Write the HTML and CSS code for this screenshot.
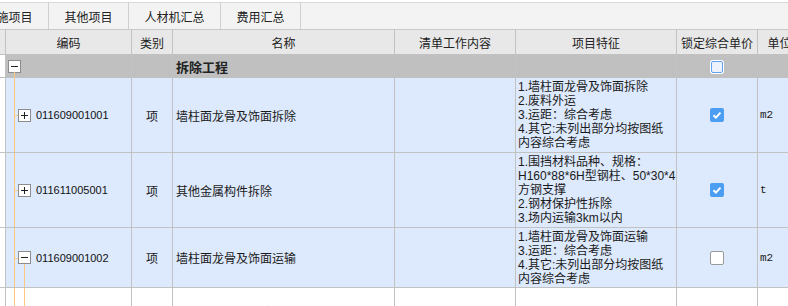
FILE: index.html
```html
<!DOCTYPE html>
<html lang="zh">

<head>
    <meta charset="UTF-8">
    <title>分部分项</title>
    <link rel="stylesheet" href="styles.css">
</head>

<body>
    <!-- Tabs -->
    <div class="tab-bar">
        <div class="tab tab-first">措施项目</div>
        <div class="tab">其他项目</div>
        <div class="tab">人材机汇总</div>
        <div class="tab">费用汇总</div>
    </div>

    <div class="sheet">
        <!-- Header -->
        <div class="row head">
            <div class="cell"></div>
            <div class="cell">编码</div>
            <div class="cell">类别</div>
            <div class="cell">名称</div>
            <div class="cell">清单工作内容</div>
            <div class="cell">项目特征</div>
            <div class="cell">锁定综合单价</div>
            <div class="cell">单位</div>
        </div>

        <!-- Group -->
        <div class="row group">
            <div class="cell blank"></div>
            <div class="cell code">
                <svg class="tog tog-root" width="13" height="13" viewBox="0 0 13 13"><rect x="0.5" y="0.5" width="12" height="12" fill="#fff" stroke="#8c8c8c"/><path d="M3 6.5h7" stroke="#222"/></svg>
                <span class="line line-down"></span>
            </div>
            <div class="cell"></div>
            <div class="cell name strong">拆除工程</div>
            <div class="cell"></div>
            <div class="cell"></div>
            <div class="cell center">
                <span class="chk chk-empty"></span>
            </div>
            <div class="cell"></div>
        </div>

        <div class="row item tall">
            <div class="cell blank"></div>
            <div class="cell code">
                <span class="line line-full"></span>
                <span class="stub"></span>
                <svg class="tog" width="13" height="13" viewBox="0 0 13 13"><rect x="0.5" y="0.5" width="12" height="12" fill="#fff" stroke="#8c8c8c"/><path d="M3 6.5h7M6.5 3v7" stroke="#222"/></svg>
                <span class="num">011609001001</span>
            </div>
            <div class="cell center">项</div>
            <div class="cell name">墙柱面龙骨及饰面拆除</div>
            <div class="cell"></div>
            <div class="cell feature">1.墙柱面龙骨及饰面拆除<br>2.废料外运<br>3.运距：综合考虑<br>4.其它:未列出部分均按图纸<br>内容综合考虑</div>
            <div class="cell center">
                <span class="chk chk-on"><svg width="14" height="14" viewBox="0 0 14 14"><path d="M3.5 7.2l2.4 2.4 4.6-5" fill="none" stroke="#fff" stroke-width="2"/></svg></span>
            </div>
            <div class="cell unit">m2</div>
        </div>

        <div class="row item tall">
            <div class="cell blank"></div>
            <div class="cell code">
                <span class="line line-full"></span>
                <span class="stub"></span>
                <svg class="tog" width="13" height="13" viewBox="0 0 13 13"><rect x="0.5" y="0.5" width="12" height="12" fill="#fff" stroke="#8c8c8c"/><path d="M3 6.5h7M6.5 3v7" stroke="#222"/></svg>
                <span class="num">011611005001</span>
            </div>
            <div class="cell center">项</div>
            <div class="cell name">其他金属构件拆除</div>
            <div class="cell"></div>
            <div class="cell feature">1.围挡材料品种、规格：<br>H160*88*6H型钢柱、50*30*4<br>方钢支撑<br>2.钢材保护性拆除<br>3.场内运输3km以内</div>
            <div class="cell center">
                <span class="chk chk-on"><svg width="14" height="14" viewBox="0 0 14 14"><path d="M3.5 7.2l2.4 2.4 4.6-5" fill="none" stroke="#fff" stroke-width="2"/></svg></span>
            </div>
            <div class="cell unit">t</div>
        </div>

        <div class="row item mid">
            <div class="cell blank"></div>
            <div class="cell code">
                <span class="line line-full"></span>
                <span class="stub"></span>
                <span class="line line-sub"></span>
                <svg class="tog" width="13" height="13" viewBox="0 0 13 13"><rect x="0.5" y="0.5" width="12" height="12" fill="#fff" stroke="#8c8c8c"/><path d="M3 6.5h7" stroke="#222"/></svg>
                <span class="num">011609001002</span>
            </div>
            <div class="cell center">项</div>
            <div class="cell name">墙柱面龙骨及饰面运输</div>
            <div class="cell"></div>
            <div class="cell feature">1.墙柱面龙骨及饰面运输<br>3.运距：综合考虑<br>4.其它:未列出部分均按图纸<br>内容综合考虑</div>
            <div class="cell center">
                <span class="chk chk-off"></span>
            </div>
            <div class="cell unit">m2</div>
        </div>

        <div class="row next">
            <div class="cell blank"></div>
            <div class="cell code">
                <span class="line line-full"></span>
                <span class="line line-sub line-sub-full"></span>
            </div>
            <div class="cell"></div>
            <div class="cell name top">墙柱面抹灰层铲除（含界面剂及基层清理等）</div>
            <div class="cell"></div>
            <div class="cell"></div>
            <div class="cell"></div>
            <div class="cell"></div>
        </div>
    </div>
</body>

</html>
```

FILE: styles.css
```css
body {
    margin: 0;
    width: 788px;
    height: 306px;
    overflow: hidden;
    background: #ffffff;
    font-family: "Liberation Sans", "Noto Sans CJK SC", sans-serif;
    font-size: 12px;
    color: #1a1a1a;
}

/* Tabs */
.tab-bar {
    display: flex;
    height: 26px;
    margin-top: 2px;
    background: #f3f3f3;
    border-top: 1px solid #d8d8d8;
    border-bottom: 1px solid #c8c8c8;
}

.tab {
    display: flex;
    align-items: center;
    justify-content: center;
    width: 79px;
    border-right: 1px solid #cfcfcf;
    font-size: 12px;
    color: #222;
    flex-shrink: 0;
}

.tab-first {
    margin-left: -31px;
}

.tab:nth-child(3) {
    width: 91px;
}

/* Sheet */
.sheet {
    width: 802px;
}

.row {
    display: grid;
    grid-template-columns: 6px 126px 41px 222px 121px 161px 81px 44px;
}

.cell {
    box-sizing: border-box;
    border-right: 1px solid #c2c2c2;
    border-bottom: 1px solid #c2c2c2;
    display: flex;
    align-items: center;
    min-width: 0;
}

.head {
    height: 25px;
    background: #e8e8e8;
    color: #222;
}

.head .cell {
    justify-content: center;
    font-size: 12px;
    white-space: nowrap;
}

.group {
    height: 23px;
    background: #c0c0c0;
}

.group .cell {
    border-bottom-color: #c0c0c0;
}

.item {
    background: #dde9fc;
}

.tall {
    height: 75px;
}

.mid {
    height: 60px;
}

.next {
    height: 40px;
}

.blank {
    background: #ffffff;
}

.center {
    justify-content: center;
}

.name {
    padding-left: 3px;
}

.strong {
    font-weight: bold;
    font-size: 13px;
    color: #222;
}

.top {
    align-items: flex-start;
    padding-top: 15px;
    white-space: nowrap;
    overflow: hidden;
}

.feature {
    padding-left: 2px;
    font-size: 12px;
    line-height: 14px;
    white-space: nowrap;
    overflow: hidden;
}

.unit {
    padding-left: 2px;
    font-family: "Liberation Mono", monospace;
    font-size: 11px;
}

/* Tree */
.code {
    position: relative;
    padding-left: 12px;
}

.group .code {
    padding-left: 2px;
}

.tog {
    display: block;
    flex-shrink: 0;
    position: relative;
}

.num {
    margin-left: 5px;
    font-size: 11px;
    color: #111;
}

.line {
    position: absolute;
    left: 8px;
    width: 1px;
    background: #fdc97f;
}

.line-full {
    top: 0;
    bottom: 0;
}

.line-down {
    top: 17px;
    bottom: -1px;
}

.line-sub {
    left: 18px;
    top: calc(50% + 6px);
    bottom: 0;
}

.line-sub-full {
    top: 0;
}

.stub {
    position: absolute;
    left: 8px;
    top: 50%;
    width: 4px;
    height: 1px;
    background: #fdc97f;
}

/* Checkboxes */
.chk {
    display: block;
    box-sizing: border-box;
    border-radius: 2px;
}

.chk-on {
    width: 14px;
    height: 14px;
    background: #4b9ef2;
}

.chk-on svg {
    display: block;
}

.chk-off {
    width: 14px;
    height: 14px;
    background: #ffffff;
    border: 1px solid #9a9a9a;
}

.chk-empty {
    width: 12px;
    height: 12px;
    margin-top: 1px;
    background: #eef3fb;
    border: 1px solid #5fa2f0;
    box-shadow: 0 0 0 1px #ffffff;
}
```
